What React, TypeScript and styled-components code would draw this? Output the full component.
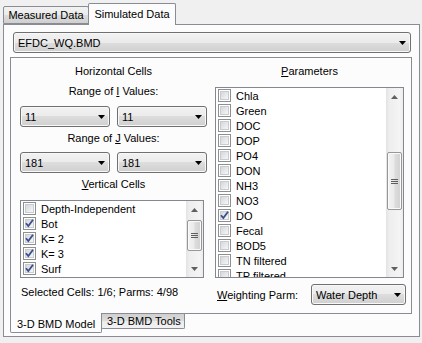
import React from 'react';
import styled, { createGlobalStyle } from 'styled-components';

const GlobalStyle = createGlobalStyle`
  html, body {
    margin: 0;
    padding: 0;
    background: #f0f0f0;
  }
  body {
    font-family: 'Liberation Sans', Arial, sans-serif;
    font-size: 11px;
    color: #000;
  }
`;

const Window = styled.div`
  width: 422px;
  height: 343px;
  background: #f0f0f0;
  overflow: hidden;
`;

const TopTabStrip = styled.div`
  display: flex;
  align-items: flex-end;
  height: 24px;
  padding-left: 3px;
  position: relative;
  z-index: 1;
`;

const TopTab = styled.div<{ $active?: boolean }>`
  box-sizing: border-box;
  display: flex;
  align-items: center;
  justify-content: center;
  border: 1px solid #898c95;
  border-bottom: ${(p) => (p.$active ? 'none' : '1px solid #898c95')};
  border-radius: 2px 2px 0 0;
  width: ${(p) => (p.$active ? '88px' : '86px')};
  height: ${(p) => (p.$active ? '22px' : '18px')};
  margin-bottom: ${(p) => (p.$active ? '-1px' : '0')};
  margin-left: ${(p) => (p.$active ? '-1px' : '0')};
  padding-bottom: ${(p) => (p.$active ? '2px' : '0')};
  background: ${(p) =>
    p.$active
      ? '#fcfcfc'
      : 'linear-gradient(#f2f2f2 0%, #ebebeb 50%, #dddddd 50%, #cfcfcf 100%)'};
`;

const OuterPanel = styled.div`
  box-sizing: border-box;
  margin: 0 2px 0 3px;
  height: 313px;
  border: 1px solid #898c95;
  background: #fcfcfc;
  padding: 7px 7px 0 6px;
  display: flex;
  flex-direction: column;
`;

const Combo = styled.div<{ $width?: number }>`
  box-sizing: border-box;
  height: 21px;
  width: ${(p) => (p.$width ? `${p.$width}px` : 'auto')};
  border: 1px solid #707070;
  border-radius: 3px;
  box-shadow: inset 0 0 0 1px #f8f8f8;
  background: linear-gradient(#f2f2f2 0%, #ebebeb 50%, #dddddd 50%, #cfcfcf 100%);
  display: flex;
  align-items: center;
  justify-content: space-between;
  padding: 0 4px 0 4px;
  white-space: nowrap;
`;

const FileCombo = styled(Combo)`
  margin: 0 1px 0 3px;
`;

const ComboArrow = () => (
  <svg width="7" height="4" viewBox="0 0 7 4">
    <path d="M0 0 H7 L3.5 4 Z" fill="#000" />
  </svg>
);

const InnerPage = styled.div`
  box-sizing: border-box;
  margin-top: 4px;
  height: 257px;
  border: 1px solid #898c95;
  background: #fcfcfc;
  display: grid;
  grid-template-columns: 187px 189px;
  column-gap: 8px;
  padding: 6px 0 0 9px;
`;

const Column = styled.div`
  display: flex;
  flex-direction: column;
`;

const Caption = styled.div<{ $gap?: number }>`
  height: 14px;
  line-height: 14px;
  text-align: center;
  margin-top: ${(p) => p.$gap ?? 0}px;
`;

const Mnemonic = styled.span`
  text-decoration: underline;
`;

const ComboRow = styled.div<{ $gap: number }>`
  display: flex;
  gap: 7px;
  margin-top: ${(p) => p.$gap}px;
`;

const ListBox = styled.div<{ $width: number; $height: number }>`
  box-sizing: border-box;
  margin-top: 9px;
  width: ${(p) => p.$width}px;
  height: ${(p) => p.$height}px;
  border: 1px solid #828790;
  background: #fff;
  display: flex;
`;

const ListItems = styled.div`
  flex: 1;
  overflow: hidden;
`;

const ListRow = styled.div`
  height: 15px;
  display: flex;
  align-items: center;
  gap: 5px;
  padding-left: 2px;
  white-space: nowrap;
`;

const CheckFrame = styled.span`
  position: relative;
  box-sizing: border-box;
  width: 13px;
  height: 13px;
  flex: none;
  border: 1px solid #8e8f8f;
  background: #fff;
  padding: 1px;
  display: flex;
`;

const CheckFill = styled.span`
  flex: 1;
  border: 1px solid #c8cbd0;
  background: linear-gradient(135deg, #d4d7dc 0%, #e6e7ea 50%, #f7f7f7 100%);
`;

const CheckMark = styled.svg`
  position: absolute;
  left: 0;
  top: 0;
`;

const CheckBox = ({ checked }: { checked?: boolean }) => (
  <CheckFrame>
    <CheckFill />
    {checked && (
      <CheckMark width="11" height="11" viewBox="0 0 11 11">
        <path
          d="M2 5.2 L4.3 8 L9 1.8"
          fill="none"
          stroke="#3b4f8c"
          strokeWidth="1.8"
        />
      </CheckMark>
    )}
  </CheckFrame>
);

const ScrollBar = styled.div`
  width: 17px;
  flex: none;
  display: flex;
  flex-direction: column;
  background: linear-gradient(90deg, #e3e3e3 0%, #eeeeee 20%, #f4f4f4 80%, #ebebeb 100%);
`;

const ScrollButton = styled.div`
  height: 17px;
  flex: none;
  display: flex;
  align-items: center;
  justify-content: center;
`;

const ScrollTrack = styled.div`
  flex: 1;
`;

const Thumb = styled.div<{ $top: number; $height: number }>`
  box-sizing: border-box;
  margin: ${(p) => p.$top}px 1px 0 1px;
  height: ${(p) => p.$height}px;
  border: 1px solid #979797;
  border-radius: 2px;
  box-shadow: inset 0 0 0 1px #fafafa;
  background: linear-gradient(90deg, #f3f3f3 0%, #ebebeb 45%, #dcdcdc 55%, #d2d2d2 100%);
  display: flex;
  align-items: center;
  justify-content: center;
`;

const ArrowGlyph = ({ up }: { up?: boolean }) => (
  <svg width="7" height="4" viewBox="0 0 7 4">
    <path d={up ? 'M0 4 H7 L3.5 0 Z' : 'M0 0 H7 L3.5 4 Z'} fill="#606060" />
  </svg>
);

const Grip = () => (
  <svg width="7" height="5" viewBox="0 0 7 5">
    <path d="M0 0.5 H7 M0 2.5 H7 M0 4.5 H7" stroke="#5f5f5f" strokeWidth="1" />
  </svg>
);

const StatusText = styled.div`
  margin-top: 7px;
  height: 14px;
  line-height: 14px;
  padding-left: 1px;
`;

const WeightRow = styled.div`
  margin-top: 6px;
  display: flex;
  align-items: center;
  justify-content: space-between;
  padding-left: 2px;
  width: 189px;
`;

const BottomTabStrip = styled.div`
  display: flex;
  align-items: flex-start;
  margin-top: -1px;
`;

const BottomTab = styled.div<{ $active?: boolean }>`
  box-sizing: border-box;
  display: flex;
  align-items: center;
  border: 1px solid #898c95;
  border-top: none;
  border-radius: 0 0 2px 2px;
  width: ${(p) => (p.$active ? '92px' : '84px')};
  height: ${(p) => (p.$active ? '20px' : '15px')};
  margin-top: ${(p) => (p.$active ? '0' : '1px')};
  padding: ${(p) => (p.$active ? '2px 0 0 6px' : '0 0 0 5px')};
  background: ${(p) =>
    p.$active
      ? '#fcfcfc'
      : 'linear-gradient(#cfcfcf 0%, #dddddd 50%, #ebebeb 50%, #f2f2f2 100%)'};
  margin-left: ${(p) => (p.$active ? '0' : '-1px')};
`;

type Item = { label: string; checked?: boolean };

const verticalCells: Item[] = [
  { label: 'Depth-Independent' },
  { label: 'Bot', checked: true },
  { label: 'K= 2', checked: true },
  { label: 'K= 3', checked: true },
  { label: 'Surf', checked: true },
];

const parameters: Item[] = [
  { label: 'Chla' },
  { label: 'Green' },
  { label: 'DOC' },
  { label: 'DOP' },
  { label: 'PO4' },
  { label: 'DON' },
  { label: 'NH3' },
  { label: 'NO3' },
  { label: 'DO', checked: true },
  { label: 'Fecal' },
  { label: 'BOD5' },
  { label: 'TN filtered' },
  { label: 'TP filtered' },
];

function CheckedList({
  items,
  width,
  height,
  thumbTop,
  thumbHeight,
}: {
  items: Item[];
  width: number;
  height: number;
  thumbTop: number;
  thumbHeight: number;
}) {
  return (
    <ListBox $width={width} $height={height}>
      <ListItems>
        {items.map((it) => (
          <ListRow key={it.label}>
            <CheckBox checked={it.checked} />
            {it.label}
          </ListRow>
        ))}
      </ListItems>
      <ScrollBar>
        <ScrollButton>
          <ArrowGlyph up />
        </ScrollButton>
        <ScrollTrack>
          <Thumb $top={thumbTop} $height={thumbHeight}>
            <Grip />
          </Thumb>
        </ScrollTrack>
        <ScrollButton>
          <ArrowGlyph />
        </ScrollButton>
      </ScrollBar>
    </ListBox>
  );
}

export default function App() {
  return (
    <Window>
      <GlobalStyle />
      <TopTabStrip>
        <TopTab>Measured Data</TopTab>
        <TopTab $active>Simulated Data</TopTab>
      </TopTabStrip>
      <OuterPanel>
        <FileCombo>
          EFDC_WQ.BMD
          <ComboArrow />
        </FileCombo>
        <InnerPage>
          <Column>
            <Caption>Horizontal Cells</Caption>
            <Caption $gap={6}>
              Range of <Mnemonic>I</Mnemonic> Values:
            </Caption>
            <ComboRow $gap={8}>
              <Combo $width={90}>
                11
                <ComboArrow />
              </Combo>
              <Combo $width={90}>
                11
                <ComboArrow />
              </Combo>
            </ComboRow>
            <Caption $gap={4}>
              Range of <Mnemonic>J</Mnemonic> Values:
            </Caption>
            <ComboRow $gap={7}>
              <Combo $width={90}>
                181
                <ComboArrow />
              </Combo>
              <Combo $width={90}>
                181
                <ComboArrow />
              </Combo>
            </ComboRow>
            <Caption $gap={4}>
              <Mnemonic>V</Mnemonic>ertical Cells
            </Caption>
            <CheckedList
              items={verticalCells}
              width={184}
              height={78}
              thumbTop={2}
              thumbHeight={31}
            />
            <StatusText>Selected Cells: 1/6; Parms: 4/98</StatusText>
          </Column>
          <Column>
            <Caption>
              <Mnemonic>P</Mnemonic>arameters
            </Caption>
            <CheckedList
              items={parameters}
              width={189}
              height={191}
              thumbTop={47}
              thumbHeight={58}
            />
            <WeightRow>
              <span>
                <Mnemonic>W</Mnemonic>eighting Parm:
              </span>
              <Combo $width={95}>
                Water Depth
                <ComboArrow />
              </Combo>
            </WeightRow>
          </Column>
        </InnerPage>
        <BottomTabStrip>
          <BottomTab $active>3-D BMD Model</BottomTab>
          <BottomTab>3-D BMD Tools</BottomTab>
        </BottomTabStrip>
      </OuterPanel>
    </Window>
  );
}
